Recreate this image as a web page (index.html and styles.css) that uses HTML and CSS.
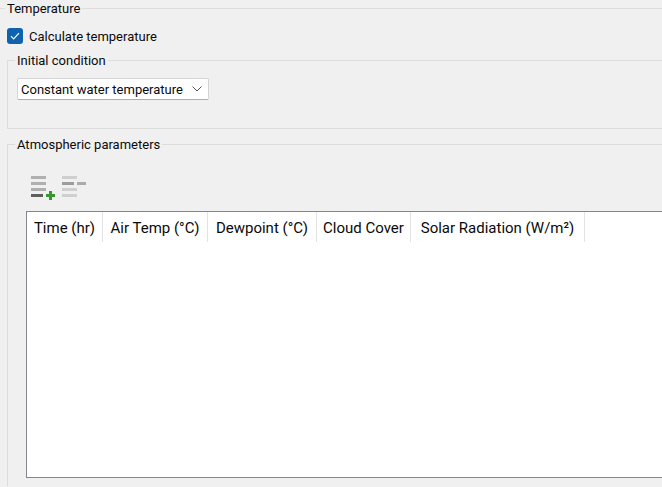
FILE: index.html
```html
<!DOCTYPE html>
<html lang="en">
<head>
    <meta charset="UTF-8">
    <title>Temperature</title>
    <link rel="stylesheet" href="styles.css">
</head>
<body>
    <fieldset class="group group-outer">
        <legend>Temperature</legend>

        <label class="check-row">
            <span class="checkbox">
                <svg width="10" height="8" viewBox="0 0 10 8"><path d="M1 4.2 3.6 6.8 9 1.2" fill="none" stroke="#fff" stroke-width="1.2"/></svg>
            </span>
            Calculate temperature
        </label>

        <fieldset class="group group-initial">
            <legend>Initial condition</legend>
            <div class="combo">
                <span>Constant water temperature</span>
                <svg width="10" height="6" viewBox="0 0 10 6"><path d="M.5 .5 5 5 9.5 .5" fill="none" stroke="#555" stroke-width="1"/></svg>
            </div>
        </fieldset>

        <fieldset class="group group-atmos">
            <legend>Atmospheric parameters</legend>

            <div class="toolbar">
                <svg width="26" height="25" viewBox="0 0 26 25">
                    <rect x="0" y="0" width="15" height="3" fill="#b0b0b0"/>
                    <rect x="0" y="6" width="15" height="3" fill="#b0b0b0"/>
                    <rect x="0" y="12" width="15" height="3" fill="#b0b0b0"/>
                    <rect x="0" y="18" width="12" height="3" fill="#5e5e5e"/>
                    <path d="M18 15h3v3h3v3h-3v3h-3v-3h-3v-3h3z" fill="#3a962e"/>
                </svg>
                <svg width="25" height="21" viewBox="0 0 25 21">
                    <rect x="0" y="0" width="15" height="3" fill="#cfcfcf"/>
                    <rect x="0" y="6" width="12" height="3" fill="#9c9c9c"/>
                    <rect x="15" y="6" width="9" height="3" fill="#ababab"/>
                    <rect x="0" y="12" width="15" height="3" fill="#cfcfcf"/>
                    <rect x="0" y="18" width="15" height="3" fill="#cfcfcf"/>
                </svg>
            </div>

            <div class="table-box">
                <table>
                    <thead>
                        <tr>
                            <th class="col-time">Time (hr)</th>
                            <th class="col-air">Air Temp (°C)</th>
                            <th class="col-dew">Dewpoint (°C)</th>
                            <th class="col-cloud">Cloud Cover</th>
                            <th class="col-solar">Solar Radiation (W/m²)</th>
                        </tr>
                    </thead>
                </table>
            </div>
        </fieldset>
    </fieldset>
</body>
</html>
```

FILE: styles.css
```css
html, body {
    height: 100%;
}

body {
    margin: 0;
    background-color: #f0f0f0;
    font-family: 'Roboto', sans-serif;
    font-size: 13px;
    color: #0a0a0a;
    overflow: hidden;
}

.group {
    border: 1px solid #dcdcdc;
    margin: 0;
    padding: 0;
    min-width: 0;
}

.group legend {
    padding: 0 2px;
    line-height: 17px;
}

.group-outer {
    margin: 0 -20px 0 -20px;
    padding: 0 0 0 26px;
    border-bottom: none;
    height: 487px;
    box-sizing: border-box;
}

.group-outer > legend {
    margin-left: -2px;
}

.check-row {
    display: flex;
    align-items: center;
    gap: 6px;
    height: 16px;
    margin-top: 11px;
}

.checkbox {
    display: flex;
    align-items: center;
    justify-content: center;
    width: 16px;
    height: 16px;
    background-color: #0f62ae;
    border-radius: 3px;
}

.group-initial {
    margin-top: 8px;
    padding: 0 0 27px 9px;
    height: 77px;
    box-sizing: border-box;
}

.group-initial legend {
    margin-left: -2px;
}

.group-atmos legend {
    margin-left: -11px;
}

.combo {
    display: flex;
    align-items: center;
    justify-content: space-between;
    box-sizing: border-box;
    width: 192px;
    height: 22px;
    margin-top: 9px;
    padding: 0 6px 0 3px;
    background-color: #fff;
    border: 1px solid #d4d4d4;
    border-bottom-color: #adadad;
    border-radius: 2px;
    white-space: nowrap;
}

.group-atmos {
    margin-top: 7px;
    padding: 0 0 0 18px;
    height: 350px;
    box-sizing: border-box;
    border-bottom: none;
}

.toolbar {
    display: flex;
    gap: 5px;
    align-items: flex-start;
    height: 25px;
    margin-top: 23px;
    padding-left: 5px;
}

.table-box {
    box-sizing: border-box;
    height: 267px;
    margin-top: 10px;
    background-color: #fff;
    border: 1px solid #85858f;
}

table {
    border-collapse: collapse;
    table-layout: fixed;
}

th {
    height: 29px;
    padding: 1px 0 0;
    font-weight: normal;
    font-size: 15px;
    text-align: center;
    white-space: nowrap;
    border-right: 1px solid #e3e3e3;
}

.col-time { width: 75px; }
.col-air { width: 104px; }
.col-dew { width: 108px; }
.col-cloud { width: 93px; }
.col-solar { width: 173px; }
```
